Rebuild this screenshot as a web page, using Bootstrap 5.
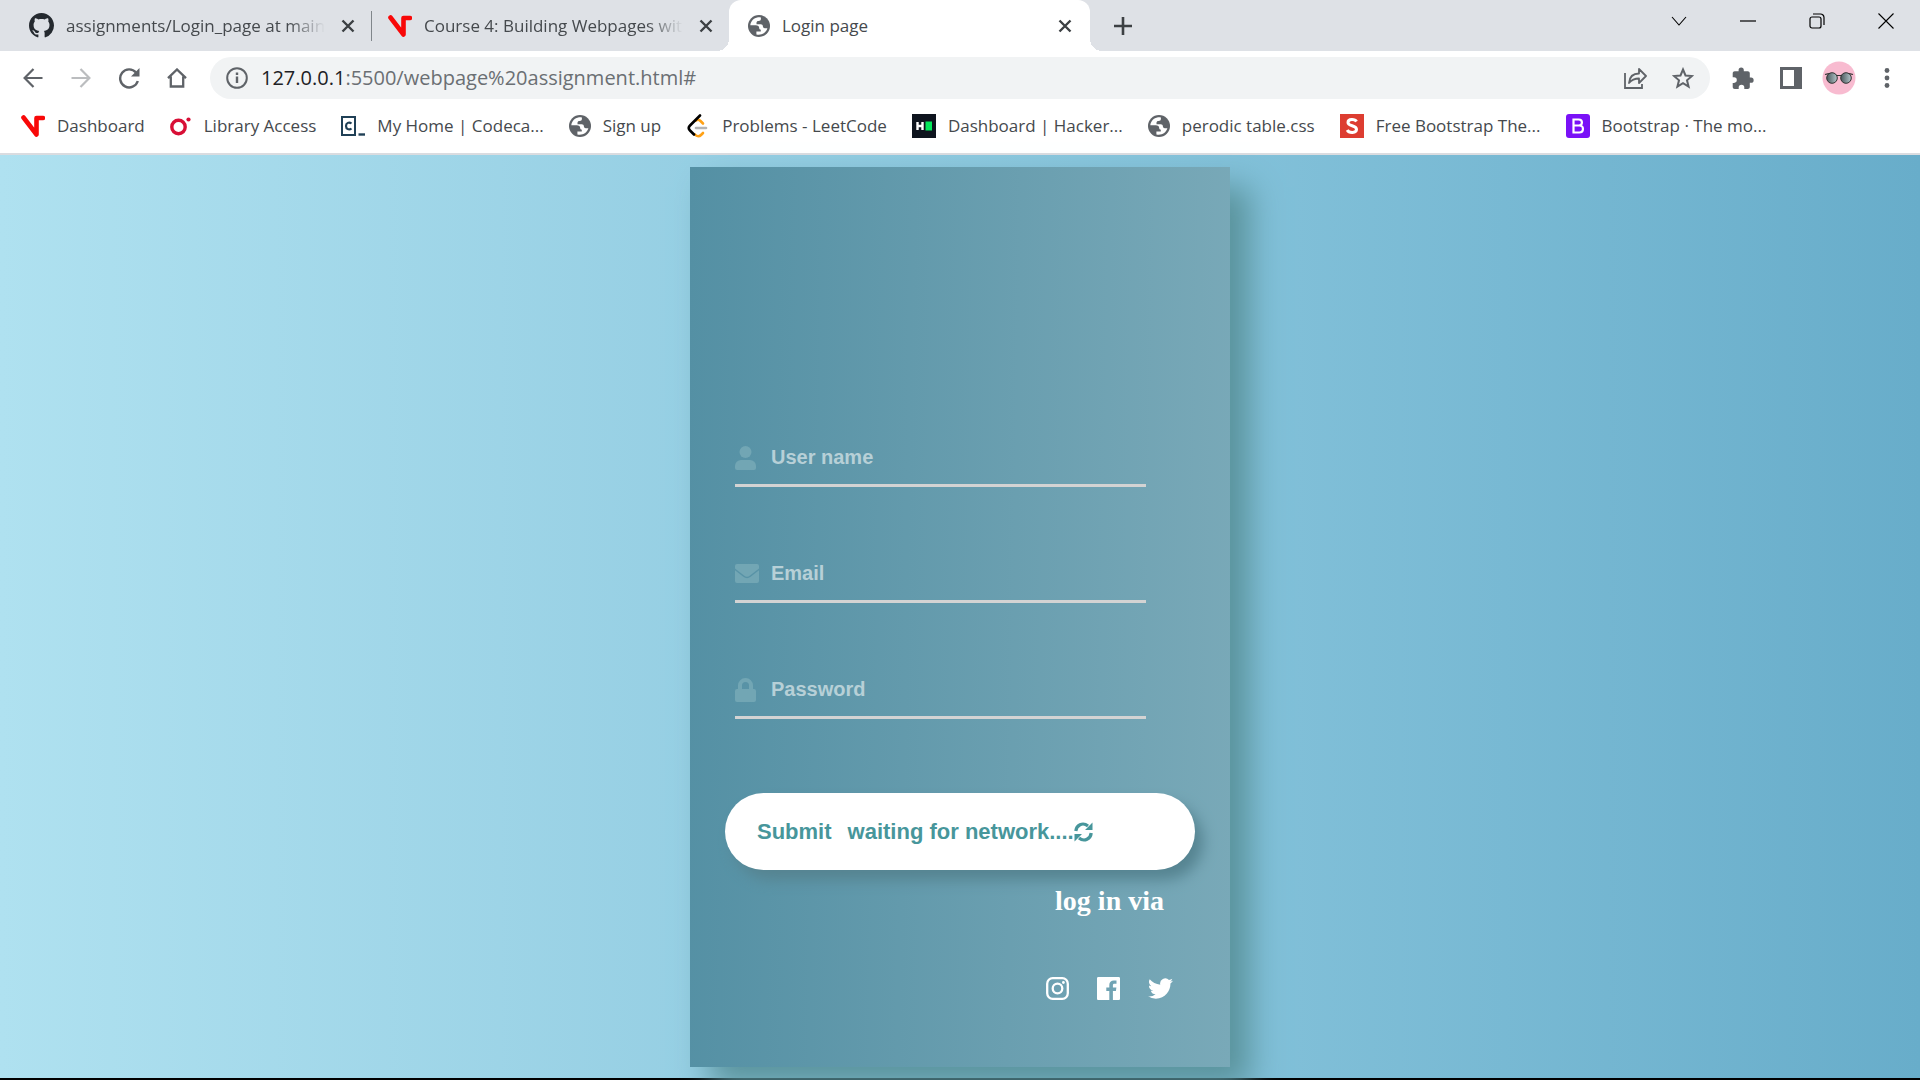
<!DOCTYPE html>
<html lang="en">
<head>
<meta charset="utf-8">
<meta name="viewport" content="width=device-width, initial-scale=1">
<title>Login page</title>
<link href="https://cdn.jsdelivr.net/npm/bootstrap@5.3.0/dist/css/bootstrap.min.css" rel="stylesheet">
<style>
  body { background: #000; font-family: "Open Sans", "Noto Sans", sans-serif; font-size: 17px; line-height: 24px; color: #3c4043; overflow-x: hidden; }
  button.plain { border: 0; background: none; padding: 0; color: inherit; display: flex; align-items: center; justify-content: center; flex: none; }
  svg { display: block; flex: none; }

  /* tab strip */
  .tabstrip { height: 51px; background: #dee1e6; }
  .page-tab { height: 51px; gap: 12px; }
  .tab-a { width: 371px; padding: 0 12px 0 29px; }
  .tab-b { width: 357px; padding: 0 12px 0 16px; }
  .tab-live { width: 361px; padding: 0 14px 0 19px; background: #fff; border-radius: 12px 12px 0 0; }
  .tab-live::before, .tab-live::after { content: ""; position: absolute; bottom: 0; width: 12px; height: 12px; }
  .tab-live::before { left: -12px; background: radial-gradient(circle at 0 0, transparent 12px, #fff 12px); }
  .tab-live::after { right: -12px; background: radial-gradient(circle at 100% 0, transparent 12px, #fff 12px); }
  .tab-split { width: 1px; height: 30px; background: #80868b; }
  .tab-name { flex: 1 1 0; min-width: 0; overflow: hidden; white-space: nowrap; text-decoration: none; color: #45494d; }
  .fade-end { -webkit-mask-image: linear-gradient(90deg, #000 calc(100% - 36px), transparent); mask-image: linear-gradient(90deg, #000 calc(100% - 36px), transparent); }
  .win-btns { height: 42px; }
  .win-btns button { width: 69px; height: 42px; }

  /* toolbar */
  .toolbar { height: 54px; background: #fff; padding: 0 9px; color: #5f6368; }
  .toolbar .nav-btn { width: 48px; height: 42px; }
  .omnibox { height: 42px; border-radius: 21px; background: #f1f3f4; padding: 0 3px 0 16px; margin-left: 9px; margin-right: 9px; }
  .address { font-size: 20px; color: #6b6f73; margin-left: 13px; }
  .address b { font-weight: 400; color: #202124; }

  /* bookmarks */
  .bookmarks { height: 50px; background: #fff; border-bottom: 2px solid #dadce0; padding: 0 21px 6px; gap: 25px; }
  .bookmarks a { color: #45494d; text-decoration: none; gap: 12px; white-space: nowrap; }

  /* login page */
  .stage { background: linear-gradient(90deg, #afe1f0, #84c2da 62%, #68adca); padding: 12px 0 11px; margin-bottom: 2px; }
  .login-panel { width: 540px; min-height: 900px; padding: 268px 35px 65px; background: linear-gradient(91deg, #5490a4, #79a9b8); box-shadow: 20px 20px 30px #5a939c; font-family: "Liberation Sans", Arial, sans-serif; }
  .field { width: 411px; height: 52px; margin: 0 0 64px 10px; border-bottom: 3px solid #d3d3d3; padding-bottom: 6px; color: #72a6b4; }
  .field label { width: 36px; padding-top: 2px; }
  .field input { flex: 1; min-width: 0; border: 0; outline: 0; background: none; padding: 0; font-size: 20px; line-height: 24px; font-weight: 700; color: #fff; }
  .field input::placeholder { color: #b7d0d7; opacity: 1; }
  .send-btn { height: 77px; border: 0; border-radius: 39px; background: #fff; padding: 0 32px; margin-top: 10px; color: #47969b; font-size: 22px; font-weight: 700; box-shadow: 8px 10px 14px #568491; }
  .send-btn .status { margin-left: 16px; }
  .via { font-family: "Liberation Serif", "Times New Roman", serif; font-size: 28px; line-height: 32px; font-weight: 700; color: #fff; margin: 15px 31px 59px 0; }
  .social { gap: 28px; margin-right: 22px; }
  .social a { color: #fff; }
</style>
</head>
<body>
<svg class="d-none" aria-hidden="true">
  <symbol id="cross" viewBox="0 0 14 14"><path d="M1.500 1.500l11 11M12.500 1.500l-11 11" stroke="#3c4043" stroke-width="2.400" fill="none"/></symbol>
  <symbol id="vmark" viewBox="0 0 24 22"><path d="M2.500 2.500L15.500 19.500V3H22" fill="none" stroke="#f80808" stroke-width="4.600" stroke-linejoin="round" stroke-linecap="round"/></symbol>
  <symbol id="globe" viewBox="0 0 22 22"><circle cx="11" cy="11" r="11" fill="#5f6368"/><path d="M10 2.300C5.500 3 2.800 6.300 2.300 10.300h5.500c2 0 3.400 1 3.400 2.700 0 1.200.6 1.700 1.600 1.700v1.700H8.400v3c5 1.200 9.800-1.700 11-6.200h-2.500c-1.500 0-2-.8-2-1.900 0-1.300-.9-2-2.200-2H8.500V7.700c0-1.200.8-1.700 2-1.700 1.600 0 2.400-.7 2.400-2V2.500c-1-.3-2-.4-2.900-.2z" fill="#fff"/></symbol>
</svg>

<header>
  <div class="tabstrip d-flex align-items-center">
    <div class="page-tab tab-a d-flex align-items-center">
      <svg width="25" height="25" viewBox="0 0 16 16" fill="#24292f"><path d="M8 0C3.580 0 0 3.580 0 8c0 3.540 2.290 6.530 5.470 7.590.4.070.55-.17.55-.38 0-.19-.01-.82-.01-1.490-2.010.37-2.530-.49-2.690-.94-.09-.23-.48-.94-.82-1.130-.28-.15-.68-.52-.01-.53.63-.01 1.080.58 1.230.82.72 1.210 1.870.87 2.330.66.07-.52.28-.87.51-1.070-1.780-.2-3.640-.89-3.640-3.950 0-.87.31-1.590.82-2.150-.08-.2-.36-1.020.08-2.120 0 0 .67-.21 2.200.82.64-.18 1.320-.27 2-.27s1.360.09 2 .27c1.530-1.040 2.200-.82 2.200-.82.44 1.100.16 1.920.08 2.120.51.56.82 1.270.82 2.150 0 3.070-1.870 3.750-3.650 3.950.29.25.54.73.54 1.480 0 1.070-.01 1.930-.01 2.200 0 .21.15.46.55.38A8.010 8.010 0 0 0 16 8c0-4.420-3.580-8-8-8z"/></svg>
      <a class="tab-name fade-end" href="#">assignments/Login_page at main</a>
      <button class="plain px-1" aria-label="Close tab"><svg width="14" height="14"><use href="#cross"/></svg></button>
    </div>
    <div class="tab-split"></div>
    <div class="page-tab tab-b d-flex align-items-center">
      <svg width="24" height="22"><use href="#vmark"/></svg>
      <a class="tab-name fade-end" href="#">Course 4: Building Webpages with</a>
      <button class="plain px-1" aria-label="Close tab"><svg width="14" height="14"><use href="#cross"/></svg></button>
    </div>
    <div class="page-tab tab-live d-flex align-items-center position-relative">
      <svg width="22" height="22"><use href="#globe"/></svg>
      <a class="tab-name" href="#">Login page</a>
      <button class="plain px-1" aria-label="Close tab"><svg width="14" height="14"><use href="#cross"/></svg></button>
    </div>
    <button class="plain ms-4" aria-label="New tab"><svg width="18" height="18" viewBox="0 0 18 18"><path d="M9 0v18M0 9h18" stroke="#3c4043" stroke-width="2.600"/></svg></button>
    <div class="win-btns d-flex ms-auto align-self-start">
      <button class="plain" aria-label="Search tabs"><svg width="16" height="10" viewBox="0 0 16 10" fill="none" stroke="#000" stroke-width="1.100"><path d="M1 1l7 8 7-8"/></svg></button>
      <button class="plain" aria-label="Minimize"><svg width="16" height="2" viewBox="0 0 16 2"><path d="M0 1h16" stroke="#000" stroke-width="1.200"/></svg></button>
      <button class="plain" aria-label="Restore"><svg width="16" height="16" viewBox="0 0 16 16" fill="none" stroke="#000" stroke-width="1.200"><rect x="1" y="4" width="11" height="11" rx="2"/><path d="M4 1h7.500A3.500 3.500 0 0 1 15 4.500V12"/></svg></button>
      <button class="plain" aria-label="Close"><svg width="16" height="16" viewBox="0 0 16 16"><path d="M.5.500l15 15M15.500.500l-15 15" stroke="#000" stroke-width="1.100"/></svg></button>
    </div>
  </div>

  <div class="toolbar d-flex align-items-center">
    <button class="plain nav-btn" aria-label="Back"><svg width="20" height="20" viewBox="0 0 20 20" fill="none" stroke="#5f6368" stroke-width="2.200"><path d="M19.500 10H2M10.500 1L1.600 10l8.900 9"/></svg></button>
    <button class="plain nav-btn" aria-label="Forward"><svg width="20" height="20" viewBox="0 0 20 20" fill="none" stroke="#bbbdbf" stroke-width="2.200"><path d="M.5 10H18M9.500 1l8.900 9-8.900 9"/></svg></button>
    <button class="plain nav-btn" aria-label="Reload"><svg width="22" height="22" viewBox="0 0 22 22" fill="none" stroke="#5f6368" stroke-width="2.400"><path d="M18 5.500A9 9 0 1 0 19.800 14"/><path d="M21.500 1v8.500H13z" fill="#5f6368" stroke="none"/></svg></button>
    <button class="plain nav-btn" aria-label="Home"><svg width="20" height="20" viewBox="0 0 20 20" fill="none" stroke="#5f6368" stroke-width="2.300"><path d="M1 10.200L10 1.500l9 8.700M3.800 8.500v10h12.400v-10"/></svg></button>
    <div class="omnibox d-flex align-items-center flex-grow-1">
      <svg width="22" height="22" viewBox="0 0 22 22" fill="none" stroke="#5f6368" stroke-width="2"><circle cx="11" cy="11" r="9.800"/><path d="M11 9.500V16M11 5.500V8" stroke-width="2.400"/></svg>
      <div class="address me-auto"><b>127.0.0.1</b>:5500/webpage%20assignment.html#</div>
      <button class="plain nav-btn" aria-label="Share"><svg width="23" height="22" viewBox="0 0 23 22" fill="none" stroke="#5f6368" stroke-width="1.800"><path d="M1 6v15h17v-4"/><path d="M5 16c.5-6 4-9.500 10-9.500V2l7 7-7 7v-4.500c-4.500 0-7.500 1.500-10 4.500z" stroke-linejoin="round"/></svg></button>
      <button class="plain nav-btn" aria-label="Bookmark this page"><svg width="22" height="22" viewBox="0 0 22 22" fill="none" stroke="#5f6368" stroke-width="2"><path d="M11 2.500l2.500 6 6.500.500-5 4.300 1.600 6.400L11 16.200l-5.600 3.500L7 13.300 2 9l6.500-.5z"/></svg></button>
    </div>
    <button class="plain nav-btn" aria-label="Extensions"><svg width="22" height="22" viewBox="0 0 22 22" fill="#5f6368"><path d="M19 10.500h-1.200V6.300c0-1.100-.9-2-2-2h-4V3a2.600 2.600 0 0 0-5.200 0v1.300H2.700c-1.100 0-2 .9-2 2v4H2a2.800 2.800 0 0 1 0 5.600H.7V20c0 1.100.9 2 2 2h4v-1.400a2.800 2.800 0 0 1 5.600 0V22h3.500c1.100 0 2-.9 2-2v-4.200H19a2.650 2.650 0 0 0 0-5.300z"/></svg></button>
    <button class="plain nav-btn" aria-label="Side panel"><svg width="22" height="22" viewBox="0 0 22 22"><path fill="#5f6368" fill-rule="evenodd" d="M0 0h22v22H0zM3 3v16h11V3z"/></svg></button>
    <button class="plain nav-btn" aria-label="Profile"><svg width="34" height="34" viewBox="0 0 34 34"><defs><linearGradient id="lens"><stop offset="0" stop-color="#4a575b"/><stop offset="1" stop-color="#b3c6ca"/></linearGradient></defs><circle cx="17" cy="17" r="16.500" fill="#f8bbd0"/><path d="M3 13.500c3-1 8-1.500 11.500 1h5c3.500-2.500 8.500-2 11.500-1" fill="none" stroke="#333" stroke-width="1.200"/><circle cx="10" cy="17" r="5.300" fill="url(#lens)" stroke="#333" stroke-width="1"/><circle cx="24" cy="17" r="5.300" fill="url(#lens)" stroke="#333" stroke-width="1"/></svg></button>
    <button class="plain nav-btn" aria-label="Menu"><svg width="6" height="20" viewBox="0 0 6 20" fill="#5f6368"><circle cx="3" cy="2.500" r="2.400"/><circle cx="3" cy="10" r="2.400"/><circle cx="3" cy="17.500" r="2.400"/></svg></button>
  </div>

  <nav class="bookmarks d-flex align-items-center" aria-label="Bookmarks">
    <a href="#" class="d-flex align-items-center"><svg width="24" height="22"><use href="#vmark"/></svg>Dashboard</a>
    <a href="#" class="d-flex align-items-center"><svg width="22" height="20" viewBox="0 0 22 20"><circle cx="8.500" cy="11" r="6.700" fill="none" stroke="#d80f36" stroke-width="3.400"/><circle cx="18.500" cy="3.500" r="2.100" fill="#d80f36"/></svg>Library Access</a>
    <a href="#" class="d-flex align-items-center"><svg width="24" height="20" viewBox="0 0 24 20" fill="none" stroke="#204056"><rect x="1" y="1" width="13" height="18" stroke-width="2"/><path d="M10.500 7.500C8 5.500 5 7 5 10s3 4.500 5.500 2.500" stroke-width="2.200"/><path d="M17.500 18.500H24" stroke-width="2.400"/></svg>My Home | Codeca...</a>
    <a href="#" class="d-flex align-items-center"><svg width="22" height="22"><use href="#globe"/></svg>Sign up</a>
    <a href="#" class="d-flex align-items-center"><svg width="24" height="24" viewBox="0 0 24 24" fill="none" stroke-width="2.600" stroke-linecap="round"><path d="M10 6.500c1.500-1.500 3-1 4.500.5L17 9.500M9 20.500c2 2.300 4.500 2 6 .5l2-2" stroke="#ffa116"/><path d="M10 14h10" stroke="#b3b3b3"/><path d="M14 1.500L4 11.500c-1.500 1.500-1.500 3.500 0 5l4 4" stroke="#000"/></svg>Problems - LeetCode</a>
    <a href="#" class="d-flex align-items-center"><svg width="24" height="24" viewBox="0 0 24 24"><path fill="#0e141e" d="M0 0h24v24H0z"/><path d="M5.500 8v8M10.500 8v8M5 12h6" stroke="#fff" stroke-width="2.400"/><path fill="#05e85b" d="M13.500 7.500h6.500v9h-6.500z"/></svg>Dashboard | Hacker...</a>
    <a href="#" class="d-flex align-items-center"><svg width="22" height="22"><use href="#globe"/></svg>perodic table.css</a>
    <a href="#" class="d-flex align-items-center"><svg width="24" height="24" viewBox="0 0 24 24"><path fill="#dd3d31" d="M0 0h24v24H0z"/><path d="M16.500 7.500C15 5 8 4.500 8 8.500c0 4 8.500 2.500 8.500 6.800 0 4-7.500 4-9.300.7" fill="none" stroke="#fff" stroke-width="3"/></svg>Free Bootstrap The...</a>
    <a href="#" class="d-flex align-items-center"><svg width="24" height="24" viewBox="0 0 24 24"><rect width="24" height="24" rx="3" fill="#7a11f7"/><path d="M7.500 5.500h5.200c4.300 0 4.300 6 0 6H7.500h5.700c5 0 5 7 0 7H7.500z" fill="none" stroke="#fff" stroke-width="2.200"/></svg>Bootstrap · The mo...</a>
  </nav>
</header>

<main class="stage d-flex justify-content-center">
  <form class="login-panel d-flex flex-column" onsubmit="return false">
    <div class="field d-flex align-items-center">
      <label for="user"><svg width="21" height="24" viewBox="0 0 21 24" fill="currentColor" role="img" aria-label="User name"><circle cx="10.500" cy="6" r="6"/><path d="M6 14h9a6 6 0 0 1 6 6v2a2 2 0 0 1-2 2H2a2 2 0 0 1-2-2v-2a6 6 0 0 1 6-6z"/></svg></label>
      <input id="user" type="text" placeholder="User name">
    </div>
    <div class="field d-flex align-items-center">
      <label for="email"><svg width="24" height="19" viewBox="0 0 24 19" fill="currentColor" role="img" aria-label="Email"><path d="M2 0h20a2 2 0 0 1 2 2v2.500l-9 7c-2 1.600-4 1.600-6 0L0 4.500V2a2 2 0 0 1 2-2z"/><path d="M0 6.200l8.300 6.500c2.400 1.900 5 1.900 7.400 0L24 6.200V17a2 2 0 0 1-2 2H2a2 2 0 0 1-2-2z"/></svg></label>
      <input id="email" type="email" placeholder="Email">
    </div>
    <div class="field d-flex align-items-center">
      <label for="pass"><svg width="21" height="24" viewBox="0 0 21 24" fill="currentColor" role="img" aria-label="Password"><path fill-rule="evenodd" d="M3 11V7.500a7.500 7.500 0 0 1 15 0V11h1a2 2 0 0 1 2 2v9a2 2 0 0 1-2 2H2a2 2 0 0 1-2-2v-9a2 2 0 0 1 2-2zm4 0h7V7.500a3.500 3.500 0 0 0-7 0z"/></svg></label>
      <input id="pass" type="password" placeholder="Password">
    </div>
    <button type="submit" class="send-btn d-flex align-items-center">Submit<span class="status">waiting for network....</span><svg width="19" height="20" viewBox="0 0 19 20" fill="none" stroke="#47969b" stroke-width="3.200"><path d="M1.800 9C2.300 3.500 8.500-.5 14 4M17.200 11c-.5 5.500-6.700 9.500-12.200 5"/><path d="M18.500.500v7.500H11zM.5 19.500V12H8z" fill="#47969b" stroke="none"/></svg></button>
    <p class="via text-end">log in via</p>
    <div class="social d-flex justify-content-end align-items-center">
      <a href="#" aria-label="Instagram"><svg width="23" height="23" viewBox="0 0 23 23" fill="none" stroke="currentColor" stroke-width="2.300"><rect x="1.200" y="1.200" width="20.600" height="20.600" rx="5.500"/><circle cx="11.500" cy="11.500" r="4.800"/><circle cx="17.400" cy="5.500" r="1.400" fill="currentColor" stroke="none"/></svg></a>
      <a href="#" aria-label="Facebook"><svg width="23" height="23" viewBox="0 0 23 23" fill="currentColor"><path d="M1.300 0h20.400c.7 0 1.300.6 1.300 1.300v20.400c0 .7-.6 1.300-1.300 1.300h-5.800v-8.900h3l.5-3.500h-3.500V8.400c0-1 .3-1.700 1.700-1.700h1.900V3.600c-.3 0-1.500-.1-2.700-.1-2.700 0-4.500 1.600-4.500 4.600v2.500h-3v3.500h3V23h-11C.6 23 0 22.400 0 21.700V1.300C0 .6.6 0 1.300 0z"/></svg></a>
      <a href="#" aria-label="Twitter"><svg width="25" height="25" viewBox="0 0 24 24" fill="currentColor"><path d="M23.950 4.570a10 10 0 0 1-2.820.770 4.960 4.960 0 0 0 2.160-2.720c-.95.560-2 .960-3.130 1.190a4.920 4.920 0 0 0-8.380 4.480C7.690 8.100 4.070 6.130 1.640 3.160a4.920 4.920 0 0 0 1.520 6.570 4.900 4.900 0 0 1-2.230-.61v.06a4.930 4.930 0 0 0 3.950 4.830 5 5 0 0 1-2.210.08 4.940 4.940 0 0 0 4.600 3.420A9.870 9.870 0 0 1 0 19.540a13.990 13.990 0 0 0 7.550 2.210c9.050 0 14-7.500 14-13.980 0-.21 0-.42-.02-.63a9.940 9.940 0 0 0 2.460-2.550z"/></svg></a>
    </div>
  </form>
</main>
<script src="https://cdn.jsdelivr.net/npm/bootstrap@5.3.0/dist/js/bootstrap.bundle.min.js"></script>
</body>
</html>
